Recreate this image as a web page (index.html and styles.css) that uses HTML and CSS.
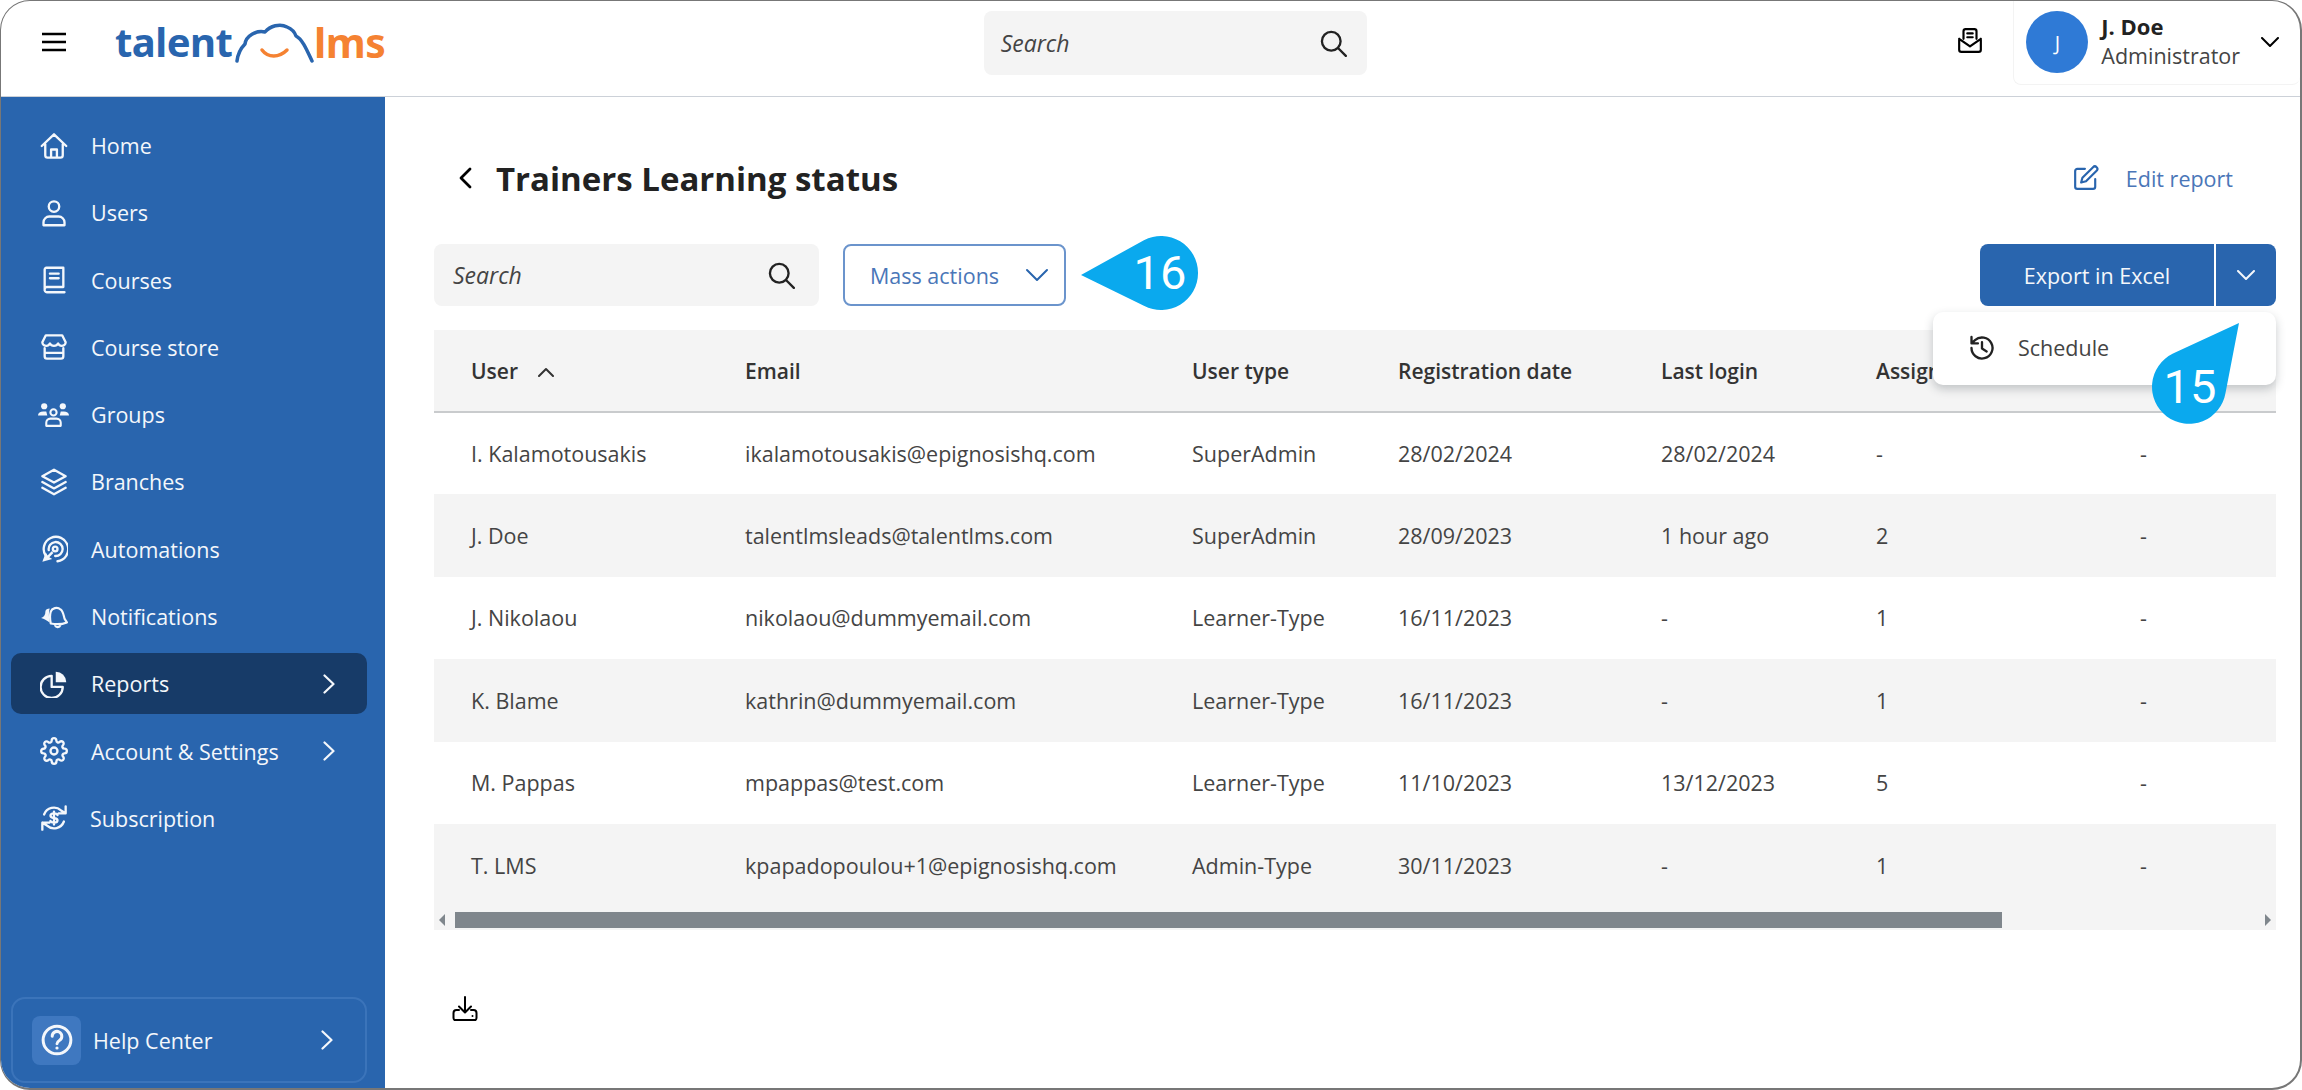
FILE: index.html
```html
<!DOCTYPE html>
<html lang="en">
<head>
    <meta charset="UTF-8">
    <title>Trainers Learning status</title>
    <link rel="stylesheet" href="styles.css">
</head>
<body>
<div class="frame">
    <header class="topbar">
        <svg class="burger" viewBox="0 0 24 20"><path d="M0 2h24M0 10h24M0 18h24"/></svg>
        <div class="logo">
            <span class="logo__talent">talent</span>
            <svg class="logo__cloud" viewBox="0 0 80 42"><path class="cloud" d="M2 39C3 31 6 26 10 22 11 14 21 8 30 10 35 4 45 1 52 5 57 7 60 11 61 14 67 17 71 26 77 39"/><path class="smile" d="M27 28C33 36 44 36 52 28"/></svg>
            <span class="logo__lms">lms</span>
        </div>
        <div class="search search--top">
            <span>Search</span>
            <svg class="ico-dark" viewBox="0 0 24 24"><circle cx="10.5" cy="10.5" r="8"/><path d="M16.5 16.5 23 23"/></svg>
        </div>
        <svg class="mail" viewBox="0 0 24 24"><path d="M6 10V3a2 2 0 0 1 2-2h8a2 2 0 0 1 2 2v7M9.5 5h5M9.5 8.5h5M2 10l10 7 10-7M2 10v10a2 2 0 0 0 2 2h16a2 2 0 0 0 2-2V10"/></svg>
        <div class="profile">
            <div class="avatar">J</div>
            <div class="profile__text">
                <b>J. Doe</b>
                <span>Administrator</span>
            </div>
            <svg class="profile__chev" viewBox="0 0 18 10"><path d="M1 1l8 8 8-8"/></svg>
        </div>
    </header>

    <div class="body">
        <aside class="sidebar">
            <nav class="nav">
                <a class="nav__item"><svg viewBox="0 0 24 24"><path d="M1.500 12 12 2l10.500 10M4.500 10v10a2 2 0 0 0 2 2h11a2 2 0 0 0 2-2V10M9.500 22v-7h5v7"/></svg>Home</a>
                <a class="nav__item"><svg viewBox="0 0 24 24"><circle cx="12" cy="6.500" r="4.500"/><path d="M3 22.500V20a5 5 0 0 1 5-5h8a5 5 0 0 1 5 5v2.500z"/></svg>Users</a>
                <a class="nav__item"><svg viewBox="0 0 24 24"><path d="M4 20V3a1.500 1.500 0 0 1 1.500-1.500H20V18H6a2 2 0 0 0-2 2 2 2 0 0 0 2 2.500h15M8.500 6.500h7.500M8.500 10.500h7.500"/></svg>Courses</a>
                <a class="nav__item"><svg viewBox="0 0 24 24"><path d="M5 2h14l3 6c0 2-2 3-3.500 3S16 10 15.500 9c-.5 1-2 2-3.500 2S9 10 8.500 9C8 10 7 11 5.500 11S2 10 2 8zM4 13v7a2 2 0 0 0 2 2h12a2 2 0 0 0 2-2v-7M4 17h16"/></svg>Course store</a>
                <a class="nav__item nav__item--wide"><svg viewBox="0 0 30 24"><g class="fill"><circle cx="6" cy="4" r="3"/><circle cx="24" cy="4" r="3"/><path d="M0 13a5 4 0 0 1 5-4h3l1 4zM30 13a5 4 0 0 0-5-4h-3l-1 4z"/></g><circle cx="15" cy="10" r="3"/><path d="M8 23v-3a4 4 0 0 1 4-4h6a4 4 0 0 1 4 4v3z"/></svg>Groups</a>
                <a class="nav__item"><svg viewBox="0 0 24 24"><path d="M12 1.500 22 7l-10 5.500L2 7zM2 12l10 5.500L22 12M2 17l10 5.500L22 17"/></svg>Branches</a>
                <a class="nav__item"><svg viewBox="0 0 24 24"><path d="M5 18A10.500 10.500 0 1 1 15 22.500M7.500 13A6 6 0 1 1 13 18"/><circle cx="13" cy="12" r="2"/><path class="fill" d="M2 23l3-8 1.500 2.500L10 14l1.500 1.500-3.500 3.500 2.500 1.500z"/></svg>Automations</a>
                <a class="nav__item"><svg viewBox="0 0 26 24"><path class="fill" d="M1 13c3-1 4-3 4-6 0-2 2-3 4-3-1 3-1 8 0 13-3-2-5-3-8-4z"/><path d="M10 18c-1-5-1-8 0-11s6-5 9-2c3 2 3 7 4 9l2 3c-5 2-10 2-15 1zM14 20c1 2 4 2 5-.5"/></svg>Notifications</a>
                <a class="nav__item nav__item--active"><svg viewBox="0 0 24 24"><path d="M10 5a9.500 9.500 0 1 0 9.500 9.500H10z"/><path class="fill" d="M13.500 1.500a9 9 0 0 1 9 9h-9z"/></svg>Reports<svg class="nav__chev" viewBox="0 0 12 20"><path d="M1.500 1.500 10.500 10l-9 8.500"/></svg></a>
                <a class="nav__item"><svg viewBox="0 0 24 24"><circle cx="12" cy="12" r="3"/><path d="M19.400 15a1.650 1.650 0 0 0 .33 1.820l.06.06a2 2 0 0 1 0 2.830 2 2 0 0 1-2.830 0l-.06-.06a1.650 1.650 0 0 0-1.820-.33 1.650 1.650 0 0 0-1 1.510V21a2 2 0 0 1-2 2 2 2 0 0 1-2-2v-.09A1.650 1.650 0 0 0 9 19.400a1.650 1.650 0 0 0-1.820.33l-.06.06a2 2 0 0 1-2.830 0 2 2 0 0 1 0-2.830l.06-.06a1.650 1.650 0 0 0 .33-1.820 1.650 1.650 0 0 0-1.510-1H3a2 2 0 0 1-2-2 2 2 0 0 1 2-2h.09A1.650 1.650 0 0 0 4.600 9a1.650 1.650 0 0 0-.33-1.820l-.06-.06a2 2 0 0 1 0-2.830 2 2 0 0 1 2.830 0l.06.06a1.650 1.650 0 0 0 1.820.33H9a1.650 1.650 0 0 0 1-1.510V3a2 2 0 0 1 2-2 2 2 0 0 1 2 2v.09a1.650 1.650 0 0 0 1 1.510 1.650 1.650 0 0 0 1.820-.33l.06-.06a2 2 0 0 1 2.830 0 2 2 0 0 1 0 2.830l-.06.06a1.650 1.650 0 0 0-.33 1.820V9a1.650 1.650 0 0 0 1.510 1H21a2 2 0 0 1 2 2 2 2 0 0 1-2 2h-.09a1.650 1.650 0 0 0-1.510 1z"/></svg>Account &amp; Settings<svg class="nav__chev" viewBox="0 0 12 20"><path d="M1.500 1.500 10.500 10l-9 8.500"/></svg></a>
                <a class="nav__item nav__item--sub"><svg viewBox="0 0 24 24"><path d="M22 2v6h-6M2 22v-6h6M3.500 9A9 9 0 0 1 18 5.500L22 8M2 16l4 2.500A9 9 0 0 0 20.500 15M15 9.500c-.5-1-1.500-1.500-3-1.500-2 0-3 1-3 2s1 1.700 3 2 3 1 3 2-1 2-3 2c-1.500 0-2.500-.5-3-1.500M12 6.500v11"/></svg>Subscription</a>
            </nav>
            <a class="help">
                <span class="help__icon"><svg viewBox="0 0 30 30"><circle cx="15" cy="15" r="13"/><path d="M10.500 11.500a4.500 4.500 0 1 1 7 3.700c-1.500 1-2.500 1.800-2.500 3.300"/><circle class="fill" cx="15" cy="22.500" r="1.500"/></svg></span>
                Help Center
                <svg class="nav__chev" viewBox="0 0 12 20"><path d="M1.500 1.500 10.500 10l-9 8.500"/></svg>
            </a>
        </aside>

        <main class="main">
            <div class="title-row">
                <svg class="back" viewBox="0 0 14 22"><path d="M12 2 3 11l9 9"/></svg>
                <h1>Trainers Learning status</h1>
                <a class="edit-link">
                    <svg viewBox="0 0 24 24"><path d="M11 3.500H4a2 2 0 0 0-2 2V20a2 2 0 0 0 2 2h14.500a2 2 0 0 0 2-2v-7M18.500 2a2.300 2.300 0 0 1 3.300 3.300L12 15l-4.500 1.200L8.700 11.700z"/></svg>
                    Edit report
                </a>
            </div>

            <div class="toolbar">
                <div class="search search--table">
                    <span>Search</span>
                    <svg class="ico-dark" viewBox="0 0 24 24"><circle cx="10.500" cy="10.500" r="8"/><path d="M16.500 16.500 23 23"/></svg>
                </div>
                <button class="mass-btn">Mass actions<svg viewBox="0 0 24 14"><path d="M2 2l10 10L22 2"/></svg></button>
                <div class="export">
                    <button class="export__main">Export in Excel</button>
                    <button class="export__arrow"><svg viewBox="0 0 18 10"><path d="M1 1l8 8 8-8"/></svg></button>
                    <div class="menu">
                        <svg viewBox="0 0 24 24"><path d="M3 12a9 9 0 1 0 3-6.700L3 8M3 2.500V8h5.500M12 7v5.500l4 2.500"/></svg>
                        Schedule
                    </div>
                </div>
            </div>

            <div class="table-wrap">
                <table class="report">
                    <thead>
                        <tr>
                            <th class="c-user">User<svg class="sort" viewBox="0 0 16 10"><path d="M1 9l7-7 7 7"/></svg></th>
                            <th class="c-email">Email</th>
                            <th class="c-type">User type</th>
                            <th class="c-reg">Registration date</th>
                            <th class="c-login">Last login</th>
                            <th class="c-assign">Assigned</th>
                            <th></th>
                        </tr>
                    </thead>
                    <tbody>
                        <tr><td>I. Kalamotousakis</td><td>ikalamotousakis@epignosishq.com</td><td>SuperAdmin</td><td>28/02/2024</td><td>28/02/2024</td><td>-</td><td>-</td></tr>
                        <tr><td>J. Doe</td><td>talentlmsleads@talentlms.com</td><td>SuperAdmin</td><td>28/09/2023</td><td>1 hour ago</td><td>2</td><td>-</td></tr>
                        <tr><td>J. Nikolaou</td><td>nikolaou@dummyemail.com</td><td>Learner-Type</td><td>16/11/2023</td><td>-</td><td>1</td><td>-</td></tr>
                        <tr><td>K. Blame</td><td>kathrin@dummyemail.com</td><td>Learner-Type</td><td>16/11/2023</td><td>-</td><td>1</td><td>-</td></tr>
                        <tr><td>M. Pappas</td><td>mpappas@test.com</td><td>Learner-Type</td><td>11/10/2023</td><td>13/12/2023</td><td>5</td><td>-</td></tr>
                        <tr><td>T. LMS</td><td>kpapadopoulou+1@epignosishq.com</td><td>Admin-Type</td><td>30/11/2023</td><td>-</td><td>1</td><td>-</td></tr>
                    </tbody>
                </table>
                <div class="scrollbar">
                    <span class="arrow arrow--left"></span>
                    <span class="thumb"></span>
                    <span class="arrow arrow--right"></span>
                </div>
            </div>

            <svg class="download" viewBox="0 0 26 26"><path d="M13 1v15M7 10.500l6 6 6-6M7 14H4.500A3 3 0 0 0 1.500 17v5a3 3 0 0 0 1 2h21a3 3 0 0 0 1-2v-5a3 3 0 0 0-3-3H19"/><circle class="fill" cx="20.500" cy="20" r="1"/></svg>
        </main>
    </div>

    <div class="callout callout--16">
        <svg viewBox="0 0 122 78"><path d="M2 41 64.900 6.200A37 37 0 1 1 64.900 71.800Z"/></svg>
        <span>16</span>
    </div>
    <div class="callout callout--15">
        <svg viewBox="0 0 90 105"><path d="M87 3 21 33.500A37 37 0 1 0 73.500 73Z"/></svg>
        <span>15</span>
    </div>
</div>
</body>
</html>
```

FILE: styles.css
```css
* {
    box-sizing: border-box;
    margin: 0;
    padding: 0;
}
body {
    background: #fff;
    font-family: "Open Sans", "Noto Sans", sans-serif;
    font-size: 21.5px;
    color: #444;
}
svg {
    display: block;
    fill: none;
    stroke: currentColor;
    stroke-width: 2;
    stroke-linecap: round;
    stroke-linejoin: round;
    flex: none;
}
svg .fill {
    fill: currentColor;
    stroke: none;
}
.frame {
    position: relative;
    width: 2302px;
    height: 1090px;
    display: flex;
    flex-direction: column;
    overflow: hidden;
    background: #fff;
    border: solid #777;
    border-width: 1px 2px 2px 1px;
    border-radius: 30px;
}

/* top bar */
.topbar {
    display: flex;
    align-items: center;
    height: 96px;
    flex: none;
    border-bottom: 1px solid #ccd1d8;
    padding-left: 41px;
    color: #000;
}
.burger {
    width: 24px;
    height: 20px;
    margin-top: -13px;
    stroke-width: 2.600;
}
.logo {
    display: flex;
    align-items: flex-end;
    height: 44px;
    margin: -14px 0 0 49px;
    width: 272px;
    font-family: "Noto Sans", sans-serif;
    font-weight: 700;
    font-size: 40px;
    line-height: 44px;
    letter-spacing: -.5px;
}
.logo__talent {
    color: #2965ae;
    width: 120px;
}
.logo__lms {
    color: #f58232;
    margin-left: -1px;
    font-size: 41px;
}
.logo__cloud {
    width: 80px;
    height: 42px;
}
.logo__cloud .cloud {
    stroke: #2965ae;
    stroke-width: 3.500;
}
.logo__cloud .smile {
    stroke: #f58232;
    stroke-width: 3.500;
}
.search {
    display: flex;
    align-items: center;
    justify-content: space-between;
    background: #f4f4f4;
    border-radius: 8px;
    font-style: italic;
    font-size: 23px;
    color: #444;
}
.search--top {
    width: 384px;
    height: 64px;
    margin: -12px 0 0 597px;
    padding: 0 20px 0 17px;
}
.search--table {
    width: 385px;
    height: 62px;
    padding: 0 24px 0 19px;
}
.ico-dark {
    width: 28px;
    height: 28px;
    color: #222;
}
.mail {
    width: 26px;
    height: 26px;
    margin: -15px 0 0 590px;
}
.profile {
    display: flex;
    align-items: center;
    width: 287px;
    height: 84px;
    margin: -12px 0 0 30px;
    padding-left: 12px;
    border: 1px solid #f3f3f3;
    border-top: 0;
    border-right: 0;
    border-radius: 0 0 8px 8px;
}
.avatar {
    width: 62px;
    height: 62px;
    border-radius: 50%;
    background: #2f7ad6;
    color: #fff;
    display: flex;
    align-items: center;
    justify-content: center;
    font-size: 20px;
    flex: none;
}
.profile__text {
    display: flex;
    flex-direction: column;
    margin-left: 13px;
    width: 160px;
    color: #444;
    line-height: 29px;
}
.profile__text b {
    color: #222;
    font-size: 22px;
    margin-top: -2px;
}
.profile__chev {
    width: 18px;
    height: 10px;
}

/* sidebar */
.body {
    flex: 1;
    display: flex;
    min-height: 0;
}
.sidebar {
    width: 384px;
    flex: none;
    background: #2965ae;
    color: #f4f7fb;
    display: flex;
    flex-direction: column;
    padding: 18px 18px 5px 10px;
}
.nav {
    display: flex;
    flex-direction: column;
    gap: 6.300px;
}
.nav__item {
    display: flex;
    align-items: center;
    height: 61px;
    padding-left: 29px;
    border-radius: 10px;
}
.nav__item > svg:first-child {
    width: 28px;
    height: 28px;
    margin-right: 23px;
}
.nav__item--wide > svg:first-child {
    width: 31px;
    height: 25px;
    margin-left: -2px;
    margin-right: 22px;
}
.nav__item--sub > svg:first-child {
    margin-right: 22px;
}
.nav__item--active {
    background: #173b68;
}
.nav__chev {
    width: 12px;
    height: 20px;
    margin-left: auto;
    margin-right: 32px;
    stroke-width: 2.200;
}
.help {
    display: flex;
    align-items: center;
    height: 86px;
    margin-top: auto;
    padding-left: 19px;
    border: 2px solid #3b74ba;
    border-radius: 14px;
}
.help__icon {
    display: flex;
    align-items: center;
    justify-content: center;
    width: 49px;
    height: 49px;
    margin-right: 12px;
    background: #3f78c0;
    border-radius: 8px;
}
.help__icon svg {
    width: 32px;
    height: 32px;
    stroke-width: 2.800;
}

/* main column */
.main {
    flex: 1;
    min-width: 0;
    padding: 56px 24px 0 49px;
    display: flex;
    flex-direction: column;
}
.title-row {
    display: flex;
    align-items: center;
    height: 50px;
    padding: 0 43px 0 24px;
    color: #222;
}
.back {
    width: 14px;
    height: 22px;
    margin-right: 24px;
    stroke-width: 2.800;
    color: #000;
}
.title-row h1 {
    font-size: 33px;
    font-weight: 700;
}
.edit-link {
    display: flex;
    align-items: center;
    margin-left: auto;
    color: #4a76b8;
}
.edit-link svg {
    width: 26px;
    height: 26px;
    margin-right: 27px;
    color: #2965ae;
}
.toolbar {
    display: flex;
    align-items: center;
    margin-top: 41px;
}
.mass-btn {
    display: flex;
    align-items: center;
    justify-content: space-between;
    width: 223px;
    height: 62px;
    margin-left: 24px;
    padding: 0 15px 0 25px;
    background: #fff;
    border: 2px solid #6b94cc;
    border-radius: 8px;
    color: #4a76b8;
    font: inherit;
}
.mass-btn svg {
    width: 24px;
    height: 14px;
    color: #2965ae;
}
.export {
    position: relative;
    display: flex;
    margin-left: auto;
    gap: 2px;
}
.export button {
    height: 62px;
    border: 0;
    background: #2965ae;
    color: #f4f7fb;
    font: inherit;
}
.export__main {
    width: 234px;
    border-radius: 8px 0 0 8px;
}
.export__arrow {
    width: 60px;
    border-radius: 0 8px 8px 0;
    display: flex;
    align-items: center;
    justify-content: center;
}
.export__arrow svg {
    width: 18px;
    height: 10px;
}
.menu {
    position: absolute;
    top: 68px;
    right: 0;
    z-index: 2;
    width: 343px;
    height: 73px;
    display: flex;
    align-items: center;
    padding: 0 0 2px 35px;
    background: #fff;
    border-radius: 10px;
    box-shadow: 0 4px 10px rgba(40, 50, 60, .25);
    color: #444;
}
.menu svg {
    width: 28px;
    height: 28px;
    margin-right: 22px;
    color: #222;
}

/* table */
.table-wrap {
    margin-top: 24px;
    width: 1842px;
}
.report {
    width: 100%;
    border-collapse: collapse;
    table-layout: fixed;
}
.report th {
    height: 82px;
    background: #f4f4f4;
    border-bottom: 2px solid #c9cbcd;
    text-align: left;
    padding-left: 37px;
    color: #333;
    font-size: 21px;
    font-weight: 600;
    white-space: nowrap;
}
.report td {
    height: 82.400px;
    padding-left: 37px;
    white-space: nowrap;
}
.report tbody tr:nth-child(even) td {
    background: #f4f4f4;
}
.c-user { width: 274px; }
.c-email { width: 447px; }
.c-type { width: 206px; }
.c-reg { width: 263px; }
.c-login { width: 215px; }
.c-assign { width: 264px; }
.sort {
    display: inline-block;
    width: 16px;
    height: 10px;
    margin-left: 20px;
    vertical-align: 2px;
}
.scrollbar {
    display: flex;
    align-items: center;
    height: 24px;
    background: #f4f4f4;
    padding: 4px 5px 0 5px;
}
.arrow {
    width: 0;
    height: 0;
    border-style: solid;
    border-color: transparent;
}
.arrow--left {
    border-width: 6px 6px 6px 0;
    border-right-color: #7f868c;
}
.arrow--right {
    border-width: 6px 0 6px 6px;
    border-left-color: #7f868c;
    margin-left: auto;
}
.thumb {
    width: 1547px;
    height: 16px;
    margin-left: 10px;
    background: #7f868c;
}
.download {
    width: 26px;
    height: 26px;
    margin: 66px 0 0 18px;
    color: #000;
}

/* numbered markers */
.callout {
    position: absolute;
    z-index: 3;
    color: #fff;
    font-family: Roboto, sans-serif;
    font-size: 47px;
    line-height: 74px;
}
.callout svg {
    width: 100%;
    height: 100%;
    fill: #0aa9ee;
    stroke: none;
}
.callout span {
    position: absolute;
    width: 74px;
    text-align: center;
}
.callout--16 {
    left: 1078px;
    top: 233px;
    width: 122px;
    height: 78px;
}
.callout--16 span {
    left: 44px;
    top: 2px;
}
.callout--15 {
    left: 2151px;
    top: 319px;
    width: 90px;
    height: 105px;
}
.callout--15 span {
    left: 1px;
    top: 30px;
}
```
